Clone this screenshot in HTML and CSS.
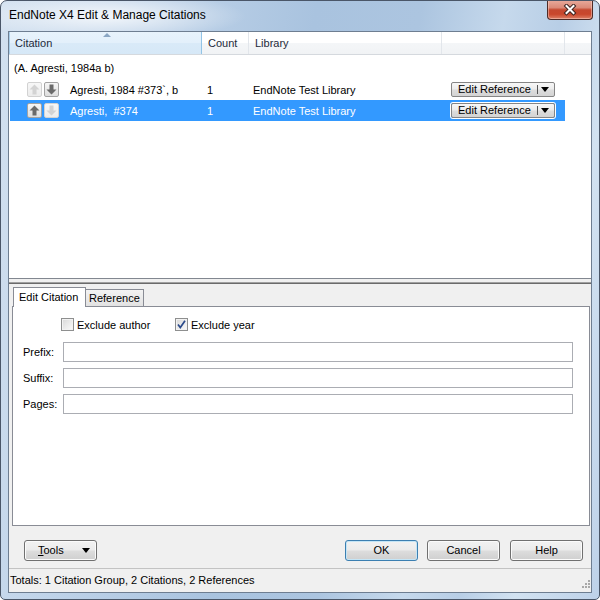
FILE: index.html
```html
<!DOCTYPE html>
<html>
<head>
<meta charset="utf-8">
<title>EndNote X4 Edit &amp; Manage Citations</title>
<link rel="stylesheet" href="styles.css">
</head>
<body>
<div class="window">
  <div class="titlebar">
    <div class="title">EndNote X4 Edit &amp; Manage Citations</div>
    <div class="close">
      <svg width="14" height="12" viewBox="0 0 14 12">
        <path d="M3.5 2 L10.5 9 M10.5 2 L3.5 9" stroke="#3d2420" stroke-width="4" stroke-linecap="square"/>
        <path d="M3.5 2 L10.5 9 M10.5 2 L3.5 9" stroke="#ffffff" stroke-width="2" stroke-linecap="square"/>
      </svg>
    </div>
  </div>
  <div class="client">
    <div class="list">
      <div class="lv-header">
        <div class="hcell sorted"><span class="sort-arrow"></span>Citation</div>
        <div class="hcell">Count</div>
        <div class="hcell">Library</div>
        <div class="hcell"></div>
        <div class="hcell last"></div>
      </div>
      <div class="group">(A. Agresti, 1984a b)</div>
      <div class="row">
        <div class="cell c-cit">
          <span class="mv off"><svg width="13" height="13" viewBox="0 0 13 13"><polygon points="6.5,1.5 11.5,6.5 8.5,6.5 8.5,11.5 4.5,11.5 4.5,6.5 1.5,6.5"/></svg></span>
          <span class="mv"><svg width="13" height="13" viewBox="0 0 13 13"><polygon points="6.5,11.5 11.5,6.5 8.5,6.5 8.5,1.5 4.5,1.5 4.5,6.5 1.5,6.5"/></svg></span>
          <span class="ctext">Agresti, 1984 #373`, b</span>
        </div>
        <div class="cell c-count">1</div>
        <div class="cell c-lib">EndNote Test Library</div>
        <div class="cell c-act"><div class="editref"><span>Edit Reference</span><span class="sep"></span><span class="tri"></span></div></div>
        <div class="cell c-last"></div>
      </div>
      <div class="row selected">
        <div class="cell c-cit">
          <span class="mv"><svg width="13" height="13" viewBox="0 0 13 13"><polygon points="6.5,1.5 11.5,6.5 8.5,6.5 8.5,11.5 4.5,11.5 4.5,6.5 1.5,6.5"/></svg></span>
          <span class="mv off"><svg width="13" height="13" viewBox="0 0 13 13"><polygon points="6.5,11.5 11.5,6.5 8.5,6.5 8.5,1.5 4.5,1.5 4.5,6.5 1.5,6.5"/></svg></span>
          <span class="ctext">Agresti,&nbsp; #374</span>
        </div>
        <div class="cell c-count">1</div>
        <div class="cell c-lib">EndNote Test Library</div>
        <div class="cell c-act"><div class="editref focus"><span>Edit Reference</span><span class="sep"></span><span class="tri"></span></div></div>
        <div class="cell c-last"></div>
      </div>
    </div>
    <div class="splitter"></div>
    <div class="pane">
      <div class="tabs">
        <div class="tab active">Edit Citation</div>
        <div class="tab">Reference</div>
      </div>
      <div class="panel">
        <div class="checks">
          <div class="check-item first"><span class="cb"></span><span>Exclude author</span></div>
          <div class="check-item"><span class="cb checked"><svg width="11" height="11" viewBox="0 0 11 11"><path d="M2 5.5 L4.3 8.5 L9 1.8" fill="none" stroke="#2b4a8a" stroke-width="1.7"/></svg></span><span>Exclude year</span></div>
        </div>
        <div class="field"><span class="flabel">Prefix:</span><div class="input"></div></div>
        <div class="field"><span class="flabel">Suffix:</span><div class="input"></div></div>
        <div class="field"><span class="flabel">Pages:</span><div class="input"></div></div>
      </div>
      <div class="buttons">
        <div class="btn tools"><span><u>T</u>ools</span><span class="tri"></span></div>
        <div class="btn default ok">OK</div>
        <div class="btn cancel">Cancel</div>
        <div class="btn help">Help</div>
      </div>
    </div>
    <div class="status">
      <span>Totals: 1 Citation Group, 2 Citations, 2 References</span>
      <svg class="grip" width="10" height="10" viewBox="0 0 10 10">
        <g fill="#a8a8a8">
          <rect x="8" y="0" width="2" height="2"/>
          <rect x="5" y="3" width="2" height="2"/><rect x="8" y="3" width="2" height="2"/>
          <rect x="2" y="6" width="2" height="2"/><rect x="5" y="6" width="2" height="2"/><rect x="8" y="6" width="2" height="2"/>
        </g>
      </svg>
    </div>
  </div>
</div>
</body>
</html>
```

FILE: styles.css
```css
body {
  margin: 0;
}

.window {
  width: 600px;
  height: 600px;
  box-sizing: border-box;
  border: 1px solid #4a5668;
  border-radius: 7px 7px 5px 5px;
  overflow: hidden;
  display: flex;
  flex-direction: column;
  font-family: "Liberation Sans", Arial, sans-serif;
  font-size: 11px;
  color: #000;
  background:
    radial-gradient(ellipse 140px 24px at 105px 15px, rgba(255,255,255,0.8), rgba(255,255,255,0) 100%),
    linear-gradient(100deg, #d3e1f0 0%, #bfd3e9 22%, #a9c3df 45%, #acc5e0 60%, #c6d9ec 72%, #b8cee6 80%, #d2e2f1 88%, #bed2e9 100%);
}

.titlebar {
  height: 30px;
  flex: none;
  display: flex;
  align-items: flex-start;
}

.title {
  padding-left: 8px;
  line-height: 29px;
  font-size: 12px;
  color: #000;
}

.close {
  margin-left: auto;
  margin-right: 6px;
  margin-top: -1px;
  width: 46px;
  height: 20px;
  box-sizing: border-box;
  border: 1px solid #4e2b26;
  border-top: none;
  border-radius: 0 0 4px 4px;
  background: linear-gradient(#e9ab9d 0%, #db8a78 40%, #c5482f 52%, #c9472c 75%, #de8066 100%);
  box-shadow: inset 0 0 0 1px rgba(255,220,210,0.45);
  display: flex;
  align-items: center;
  justify-content: center;
}

.client {
  flex: 1;
  margin: 0 7px 6px 7px;
  border: 1px solid #6e7e91;
  background: #f0f0f0;
  display: flex;
  flex-direction: column;
}

/* list view */
.list {
  height: 247px;
  box-sizing: border-box;
  background: #fff;
  border-bottom: 1px solid #828790;
  flex: none;
}

.lv-header,
.row {
  display: grid;
  grid-template-columns: 193px 47px 193px 123px 1fr;
}

.lv-header {
  height: 23px;
  box-sizing: border-box;
  border-bottom: 1px solid #d5d9de;
}

.hcell {
  position: relative;
  line-height: 22px;
  padding-left: 6px;
  border-right: 1px solid #e2e6eb;
  background: linear-gradient(#ffffff 0%, #ffffff 48%, #f4f6f8 50%, #f1f3f5 100%);
  color: #1e2a3a;
}

.hcell.last {
  border-right: none;
}

.hcell.sorted {
  padding-left: 5px;
  border-left: 1px solid #a9cde9;
  border-right: 1px solid #93c4e6;
  background: linear-gradient(#e8f3fc 0%, #e3f0fb 48%, #d9eaf8 50%, #d6e8f7 100%);
}

.sort-arrow {
  position: absolute;
  top: 1px;
  left: 93px;
  width: 0;
  height: 0;
  border-left: 4px solid transparent;
  border-right: 4px solid transparent;
  border-bottom: 4px solid #8aa6c3;
}

.group {
  height: 24px;
  line-height: 26px;
  padding-left: 5px;
}

.row {
  height: 21px;
}

.cell {
  display: flex;
  align-items: center;
  white-space: nowrap;
}

.c-cit {
  padding-left: 18px;
}

.mv {
  width: 15px;
  height: 15px;
  box-sizing: border-box;
  border: 1px solid #a3a3a3;
  border-radius: 2px;
  background: linear-gradient(#f6f6f6, #dedede);
  display: flex;
  align-items: center;
  justify-content: center;
  margin-right: 2px;
  fill: #6a6a6a;
}

.mv.off {
  border-color: #d2d2d2;
  background: linear-gradient(#f7f7f7, #ececec);
  fill: #d3d3d3;
}

.ctext {
  margin-left: 9px;
}

.c-count {
  padding-left: 5px;
}

.c-lib {
  padding-left: 4px;
}

.c-act {
  padding-left: 9px;
}

.row.selected .cell {
  background: #3399ff;
  color: #fff;
}

.row.selected .c-cit {
  margin-left: 1px;
  padding-left: 17px;
}

.row.selected .c-last {
  background: transparent;
}

.editref {
  width: 104px;
  height: 15px;
  box-sizing: border-box;
  border: 1px solid #858585;
  border-radius: 2px;
  background: linear-gradient(#f7f7f7 0%, #ececec 48%, #dddddd 52%, #d3d3d3 100%);
  display: flex;
  align-items: center;
  padding: 0 5px 0 6px;
  color: #000;
  line-height: 13px;
}

.editref.focus {
  box-shadow: 0 0 0 1px #ffffff;
}

.editref .sep {
  margin-left: auto;
  width: 1px;
  height: 9px;
  background: #555;
  margin-right: 3px;
}

.tri {
  width: 0;
  height: 0;
  border-left: 4px solid transparent;
  border-right: 4px solid transparent;
  border-top: 5px solid #000;
}

.splitter {
  height: 3px;
  flex: none;
}

/* lower pane */
.pane {
  height: 286px;
  box-sizing: border-box;
  flex: none;
  border-top: 1px solid #a0a0a0;
  box-shadow: inset 0 1px 0 #6a6a6a;
  display: flex;
  flex-direction: column;
}

.tabs {
  margin-top: 4px;
  margin-left: 4px;
  height: 19px;
  display: flex;
  align-items: flex-end;
}

.tab {
  height: 17px;
  box-sizing: border-box;
  width: 58px;
  border: 1px solid #898c95;
  border-left: none;
  border-bottom: none;
  padding-left: 3px;
  line-height: 17px;
  background: linear-gradient(#f3f3f3, #e2e2e2);
}

.tab.active {
  position: relative;
  z-index: 1;
  width: 73px;
  height: 20px;
  margin-bottom: -1px;
  border-left: 1px solid #898c95;
  padding-left: 5px;
  line-height: 18px;
  background: #ffffff;
}

.panel {
  height: 220px;
  box-sizing: border-box;
  margin: 0 1px 0 3px;
  border: 1px solid #898c95;
  background: #ffffff;
  padding-top: 11px;
}

.checks {
  display: flex;
  align-items: center;
  height: 13px;
  padding-left: 48px;
}

.check-item {
  display: flex;
  align-items: center;
  gap: 3px;
}

.check-item.first {
  width: 114px;
}

.cb {
  width: 13px;
  height: 13px;
  box-sizing: border-box;
  border: 1px solid #8e8f8f;
  background: linear-gradient(135deg, #d8d8d8, #fbfbfb);
  box-shadow: inset 0 0 0 1px #f2f2f2;
  display: flex;
  align-items: center;
  justify-content: center;
}

.field {
  display: flex;
  align-items: center;
  margin-top: 6px;
}

.checks + .field {
  margin-top: 11px;
}

.flabel {
  width: 40px;
  padding-left: 10px;
}

.input {
  width: 510px;
  height: 20px;
  box-sizing: border-box;
  border: 1px solid #abadb3;
  background: #fff;
}

.buttons {
  margin-top: 14px;
  display: flex;
  align-items: center;
}

.btn {
  width: 73px;
  height: 21px;
  box-sizing: border-box;
  border: 1px solid #707070;
  border-radius: 3px;
  background: linear-gradient(#f2f2f2 0%, #ebebeb 48%, #dddddd 52%, #cfcfcf 100%);
  box-shadow: inset 0 0 0 1px #fbfbfb;
  display: flex;
  align-items: center;
  justify-content: center;
  line-height: 19px;
}

.btn.tools {
  margin-left: 15px;
  justify-content: flex-start;
  padding-left: 13px;
}

.btn.tools .tri {
  margin-left: auto;
  margin-right: 6px;
  border-left-width: 4.5px;
  border-right-width: 4.5px;
}

.btn.ok {
  margin-left: auto;
}

.btn.default {
  border-color: #3c7fb1;
  box-shadow: inset 0 0 0 1px #c4e5f6;
}

.btn.cancel {
  margin-left: 9px;
}

.btn.help {
  margin-left: 10px;
  margin-right: 8px;
}

.status {
  flex: 1;
  border-top: 1px solid #c3c3c3;
  display: flex;
  align-items: center;
  padding-left: 1px;
  padding-bottom: 1px;
}

.grip {
  margin-left: auto;
  margin-right: 1px;
  align-self: flex-end;
  margin-bottom: 1px;
}
```
